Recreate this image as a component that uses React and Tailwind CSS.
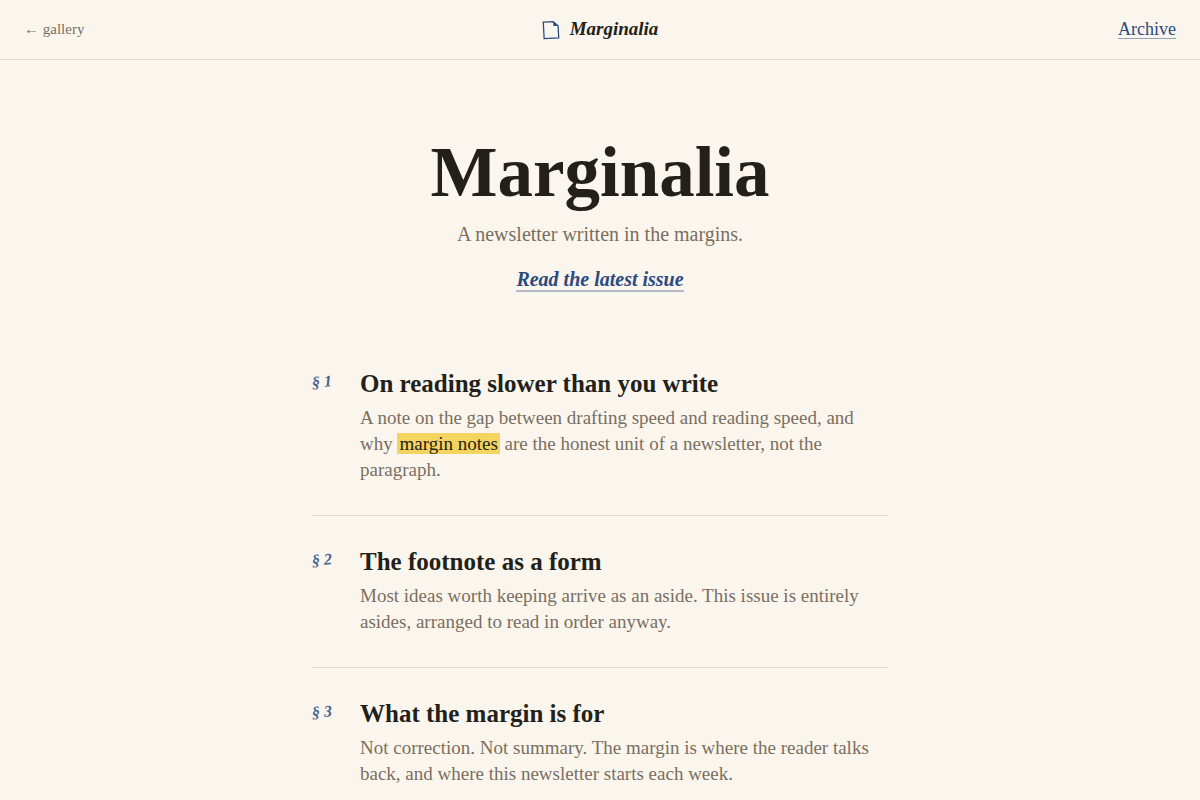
import React from 'react';

const issues = [
  {
    id: 1,
    title: 'On reading slower than you write',
    body: (
      <>
        A note on the gap between drafting speed and reading speed, and why{' '}
        <mark className="bg-[#f4d35e] px-0.5 text-[#231f1a]">margin notes</mark> are the honest
        unit of a newsletter, not the paragraph.
      </>
    ),
  },
  {
    id: 2,
    title: 'The footnote as a form',
    body: 'Most ideas worth keeping arrive as an aside. This issue is entirely asides, arranged to read in order anyway.',
  },
  {
    id: 3,
    title: 'What the margin is for',
    body: 'Not correction. Not summary. The margin is where the reader talks back, and where this newsletter starts each week.',
  },
];

function PageIcon() {
  return (
    <svg width="18" height="20" viewBox="0 0 18 20" fill="none" className="-rotate-3" aria-hidden="true">
      <path d="M1.7 1.7H11.5L16.3 6.2V18.3H1.7Z" stroke="#2b4a7f" strokeWidth="1.3" />
      <path d="M11.6 1.4V6.2H16.6Z" fill="#2b4a7f" />
    </svg>
  );
}

function Header() {
  return (
    <header className="grid h-[60px] grid-cols-3 items-center border-b border-[#e3d9c8] px-6">
      <a href="#gallery" className="justify-self-start text-[15px] text-[#7a6e60]">
        ← gallery
      </a>
      <a href="#top" className="flex items-center gap-2.5 justify-self-center text-[19px] font-bold italic">
        <PageIcon />
        Marginalia
      </a>
      <a
        href="#archive"
        className="justify-self-end border-b border-[#2b4a7f]/50 text-lg leading-[18px] text-[#2b4a7f]"
      >
        Archive
      </a>
    </header>
  );
}

function Issue({ issue }) {
  return (
    <article className="flex border-b border-[#e3d9c8] py-8 last:border-b-0">
      <div className="w-12 shrink-0">
        <span className="inline-block -rotate-4 text-base leading-4 font-bold italic text-[#2b4a7f] opacity-85">
          § {issue.id}
        </span>
      </div>
      <div className="min-w-0 flex-1">
        <h2 className="text-[25px] leading-7 font-bold">{issue.title}</h2>
        <p className="mt-[7px] text-[19px] leading-[26px] text-[#7a6e60]">{issue.body}</p>
      </div>
    </article>
  );
}

export default function App() {
  return (
    <div
      id="top"
      className="min-h-screen bg-[#faf6ee] font-['Liberation_Serif',serif] text-[#231f1a]"
    >
      <Header />
      <main className="mx-auto max-w-[624px] px-6">
        <section className="pt-[76px] pb-[45px] text-center">
          <h1 className="text-[71px] leading-[72px] font-bold">Marginalia</h1>
          <p className="mt-3 text-xl leading-7 text-[#7a6e60]">A newsletter written in the margins.</p>
          <a
            href="#latest"
            className="mt-5 inline-block border-b-2 border-[#2b4a7f]/35 text-xl leading-[22px] font-bold italic text-[#2b4a7f]"
          >
            Read the latest issue
          </a>
        </section>
        <section aria-label="Issues">
          {issues.map((issue) => (
            <Issue key={issue.id} issue={issue} />
          ))}
        </section>
      </main>
    </div>
  );
}
